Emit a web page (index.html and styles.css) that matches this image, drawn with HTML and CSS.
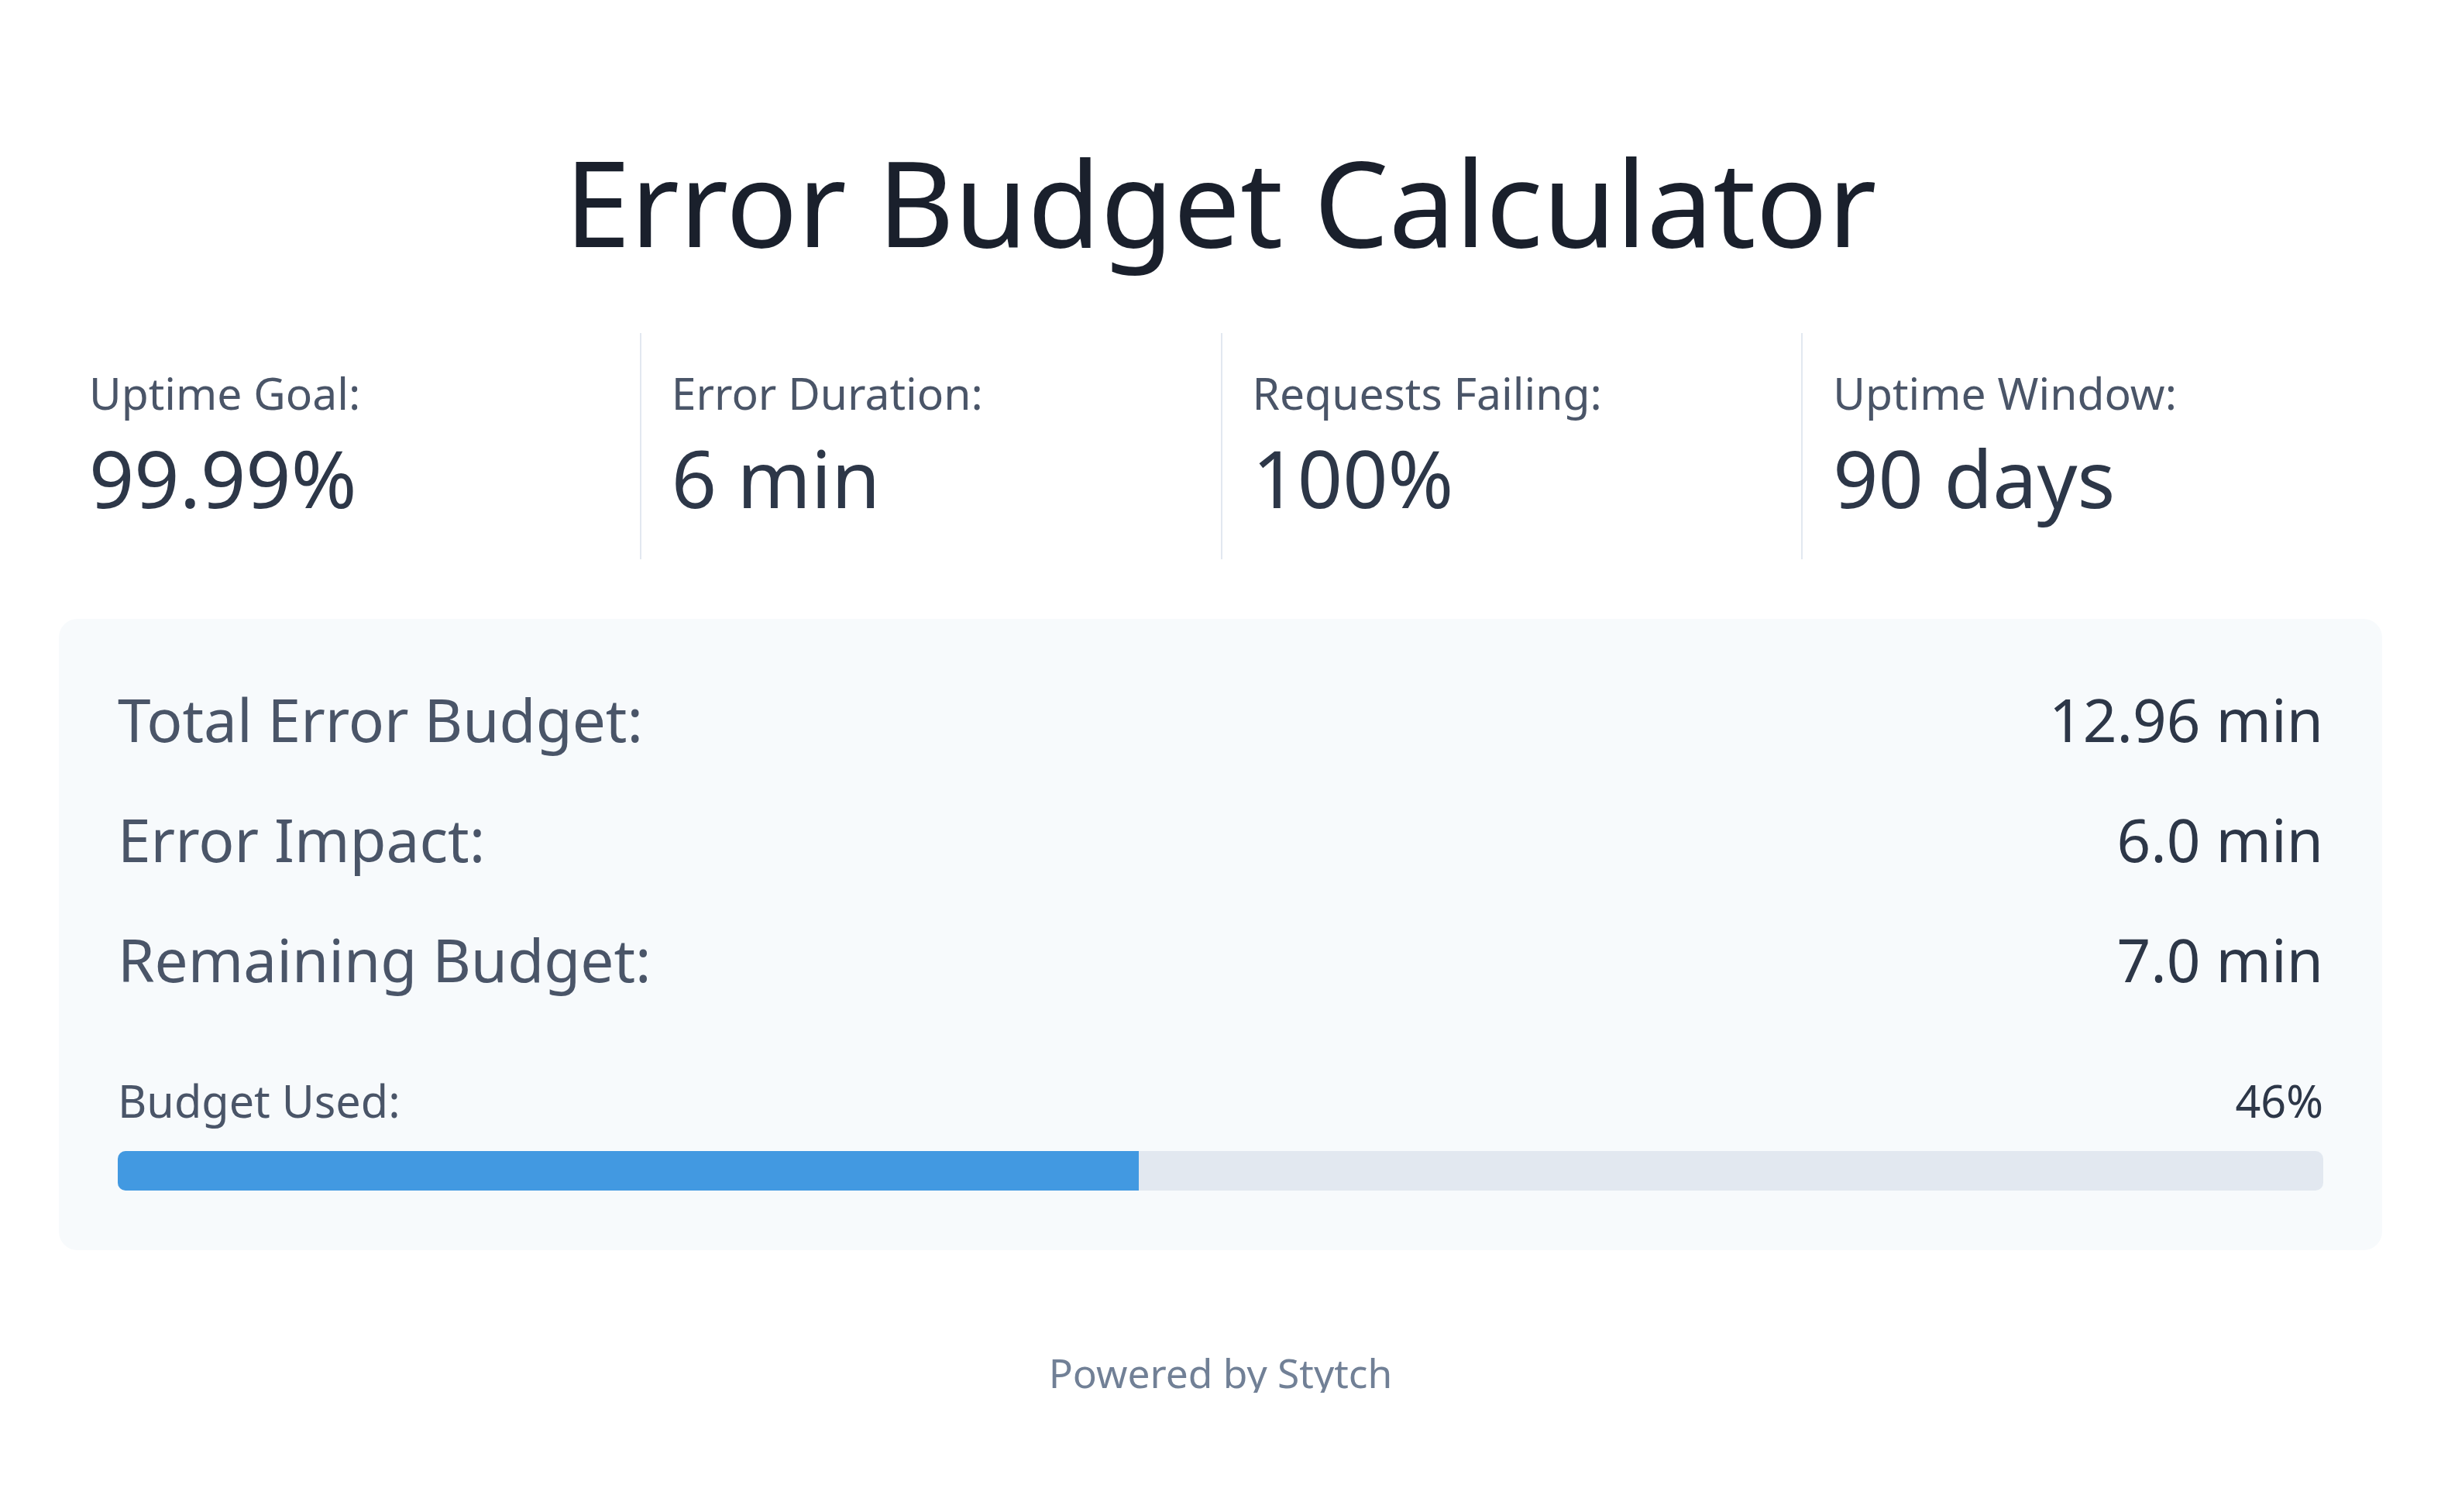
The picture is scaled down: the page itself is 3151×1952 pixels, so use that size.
FILE: index.html
```html
<!DOCTYPE html>
<html lang="en">
<head>
<meta charset="utf-8">
<title>Error Budget Calculator</title>
<link rel="stylesheet" href="styles.css">
</head>
<body>
<main class="page">
  <h1 class="title">Error Budget Calculator</h1>
  <section class="stats">
    <div class="stat">
      <div class="stat-label">Uptime Goal:</div>
      <div class="stat-value">99.99%</div>
    </div>
    <div class="stat">
      <div class="stat-label">Error Duration:</div>
      <div class="stat-value">6 min</div>
    </div>
    <div class="stat">
      <div class="stat-label">Requests Failing:</div>
      <div class="stat-value">100%</div>
    </div>
    <div class="stat">
      <div class="stat-label">Uptime Window:</div>
      <div class="stat-value">90 days</div>
    </div>
  </section>
  <section class="card">
    <div class="rows">
      <div class="row"><span class="row-label">Total Error Budget:</span><span class="row-value">12.96 min</span></div>
      <div class="row"><span class="row-label">Error Impact:</span><span class="row-value">6.0 min</span></div>
      <div class="row"><span class="row-label">Remaining Budget:</span><span class="row-value">7.0 min</span></div>
    </div>
    <div class="usage">
      <div class="usage-head"><span class="usage-label">Budget Used:</span><span class="usage-value">46%</span></div>
      <div class="track"><div class="fill" style="width: 46.296%"></div></div>
    </div>
  </section>
  <footer class="footer">Powered by Stytch</footer>
</main>
</body>
</html>
```
FILE: styles.css
```css
* { box-sizing: border-box; }
html, body { margin: 0; padding: 0; background: #ffffff; }
body { font-family: "Noto Sans", "Open Sans", sans-serif; color: #2d3748; }

.page {
  width: 2999px;
  margin: 0 auto;
  padding-top: 183px;
}

.title {
  margin: 0;
  font-size: 153px;
  line-height: 154px;
  font-weight: 400;
  text-align: center;
  color: #1a202c;
}

.stats {
  margin-top: 93px;
  display: grid;
  grid-template-columns: repeat(4, 1fr);
}
.stat {
  padding: 48px 39px 53px;
}
.stat + .stat { border-left: 2px solid #e2e8f0; }
.stat-label {
  font-size: 57px;
  line-height: 58px;
  color: #4a5568;
}
.stat-value {
  margin-top: 29px;
  font-size: 102px;
  line-height: 104px;
  color: #2d3748;
}

.card {
  margin-top: 77px;
  background: #f7fafc;
  border-radius: 24px;
  padding: 77px 76px 77px;
}
.rows { display: flex; flex-direction: column; gap: 51px; }
.row {
  display: flex;
  justify-content: space-between;
  font-size: 76.5px;
  line-height: 104px;
}
.row-label { color: #4a5568; }
.row-value { color: #2d3748; }

.usage { margin-top: 101px; }
.usage-head {
  display: flex;
  justify-content: space-between;
  font-size: 57.5px;
  line-height: 60px;
}
.usage-label { color: #4a5568; }
.usage-value { color: #2d3748; }
.track {
  margin-top: 35px;
  height: 51px;
  background: #e2e8f0;
  border-radius: 10px;
  overflow: hidden;
}
.fill { height: 100%; background: #4299e1; }

.footer {
  margin-top: 132px;
  text-align: center;
  font-size: 51.5px;
  line-height: 52px;
  color: #718096;
}
```
